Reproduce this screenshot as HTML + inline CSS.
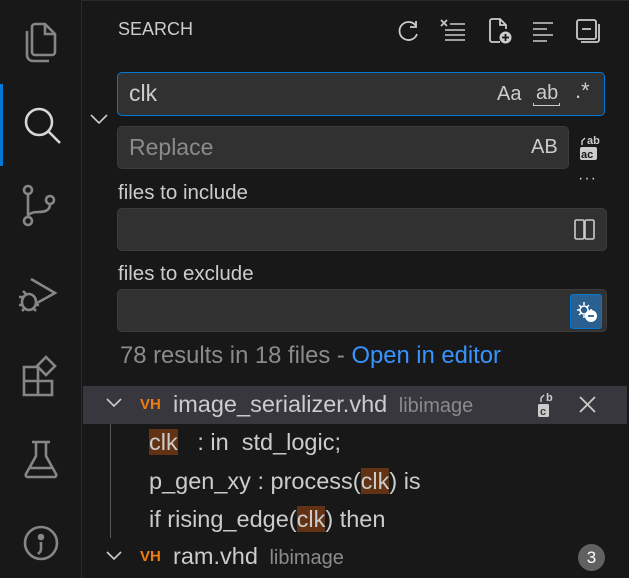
<!DOCTYPE html>
<html><head><meta charset="utf-8"><style>
*{margin:0;padding:0;box-sizing:border-box}
body{width:629px;height:578px;background:#181818;font-family:"Liberation Sans",sans-serif;color:#ccc;position:relative;overflow:hidden}
.ab{position:absolute;left:0;top:0;width:82px;height:578px;background:#181818;border-right:1px solid #2b2b2b}
.abar{position:absolute;left:0;top:84px;width:3px;height:82px;background:#0078d4}
.a{position:absolute}
.inp{position:absolute;background:#313131;border:1px solid #3c3c3c;border-radius:5px}
.t{position:absolute;white-space:nowrap}
.hl{background:#613214}
.lib{font-size:20px;color:#8b8b8b;margin-left:6px}
svg{position:absolute;overflow:visible}
</style></head><body>
<div style="position:absolute;left:0;top:0;width:629px;height:1px;background:#2b2b2b"></div>
<div class="ab"></div><div class="abar"></div>
<svg style="left:22px;top:22px" width="36" height="42" fill="none" stroke="#868686" stroke-width="2.6"><path d="M13 2h10l10 10v18a3 3 0 0 1-3 3H13a3 3 0 0 1-3-3V5a3 3 0 0 1 3-3z"/><path d="M23 2v10h10"/><path d="M5 9v24a6 6 0 0 0 6 6h16"/></svg>
<svg style="left:22px;top:105px" width="40" height="40" fill="none" stroke="#d7d7d7" stroke-width="2.6"><circle cx="17" cy="17" r="13"/><path d="M26 26l12 12"/></svg>
<svg style="left:22px;top:185px" width="40" height="45" fill="none" stroke="#868686" stroke-width="2.6"><circle cx="6" cy="5" r="4"/><circle cx="28" cy="15" r="4"/><circle cx="6" cy="36" r="4"/><path d="M6 9v23M28 19c0 6-4 8-12 8-6 0-10 2-10 5"/></svg>
<svg style="left:18px;top:275px" width="45" height="40" fill="none" stroke="#868686" stroke-width="2.6"><path d="M13 4l24 14-18 10"/><ellipse cx="11" cy="27" rx="7" ry="8"/><path d="M1 22h4M1 30h4M17 30h4M4 36l3-3M18 36l-3-3M5 16l3 3"/></svg>
<svg style="left:22px;top:355px" width="42" height="42" fill="none" stroke="#868686" stroke-width="2.6"><path d="M2 12h14v14H2zM2 26h14v14H2zM16 26h14v14H16zM2 12v28"/><path d="M24 2l9 9-9 9-9-9z"/></svg>
<svg style="left:24px;top:440px" width="36" height="40" fill="none" stroke="#868686" stroke-width="2.6"><path d="M8 2h18M12 2v14L2 34a2 2 0 0 0 2 3h26a2 2 0 0 0 2-3L22 16V2M6 28h22"/></svg>
<svg style="left:20px;top:522px" width="42" height="42" fill="none" stroke="#868686" stroke-width="2.6"><circle cx="21" cy="21" r="16"/><circle cx="21" cy="15" r="2" fill="#868686"/><path d="M21 20v7c0 3-2 4-3 5"/></svg>

<div class="t" style="left:118px;top:19px;font-size:18px;color:#ccc">SEARCH</div>
<svg style="left:398px;top:20px" width="22" height="22" fill="none" stroke="#ccc" stroke-width="1.8"><path d="M18 6A9 9 0 1 0 19 14"/><path d="M18 1v6h-6"/></svg>
<svg style="left:440px;top:19px" width="26" height="22" fill="none" stroke="#ccc" stroke-width="1.6"><path d="M1 1l6 6M7 1L1 7M10 5h15M5 11h20M5 16h20M5 21h20"/></svg>
<svg style="left:488px;top:18px" width="26" height="28" fill="none" stroke="#ccc" stroke-width="1.8"><path d="M12 24H4a2 2 0 0 1-2-2V3a2 2 0 0 1 2-2h8l6 6v4"/><path d="M12 1v6h6"/><circle cx="17.5" cy="19.5" r="6" fill="#ccc" stroke="none"/><path d="M17.5 16v7M14 19.5h7" stroke="#181818" stroke-width="1.8"/></svg>
<svg style="left:532px;top:22px" width="22" height="20" fill="none" stroke="#ccc" stroke-width="1.6"><path d="M1 1h20M1 7h14M1 13h20M1 19h14"/></svg>
<svg style="left:576px;top:19px" width="24" height="24" fill="none" stroke="#ccc" stroke-width="1.8"><rect x="1" y="1" width="19" height="19" rx="2"/><path d="M6 10h9M23 5v16a2 2 0 0 1-2 2H5"/></svg>

<svg style="left:90px;top:114px" width="18" height="12" fill="none" stroke="#ccc" stroke-width="1.6"><path d="M1 1l8 8 8-8"/></svg>

<div class="inp" style="left:117px;top:72px;width:488px;height:44px;border-color:#0078d4"></div>
<div class="t" style="left:129px;top:80px;font-size:23px;color:#ccc">clk</div>
<div class="t" style="left:497px;top:83px;font-size:20px;color:#ccc">Aa</div>
<div class="t" style="left:536px;top:82px;font-size:20px;color:#ccc">ab</div>
<div class="a" style="left:533px;top:103px;width:27px;height:3px;border:1.5px solid #ccc;border-top:none"></div>
<div class="t" style="left:575px;top:78px;font-size:22px;color:#ccc">.*</div>

<div class="inp" style="left:117px;top:126px;width:452px;height:43px"></div>
<div class="t" style="left:129px;top:134px;font-size:23px;color:#8b8b8b">Replace</div>
<div class="t" style="left:531px;top:136px;font-size:20px;color:#ccc">AB</div>
<svg style="left:578px;top:134px" width="26" height="28"><text x="9" y="10" font-size="11" fill="#ccc" font-family="Liberation Sans" font-weight="bold">ab</text><rect x="2" y="13" width="17" height="13" rx="2" fill="#ccc"/><text x="3" y="24" font-size="11" fill="#181818" font-family="Liberation Sans" font-weight="bold">ac</text><path d="M7 4l-3 3v4" stroke="#ccc" fill="none" stroke-width="1.4"/></svg>
<div class="t" style="left:578px;top:170px;font-size:16px;color:#ccc;letter-spacing:1px">···</div>

<div class="t" style="left:118px;top:181px;font-size:20.5px;color:#ccc">files to include</div>
<div class="inp" style="left:117px;top:208px;width:490px;height:43px"></div>
<svg style="left:574px;top:219px" width="22" height="22" fill="none" stroke="#ccc" stroke-width="1.6"><rect x="1" y="1" width="9" height="19" rx="1.5"/><rect x="11" y="1" width="9" height="19" rx="1.5"/></svg>

<div class="t" style="left:118px;top:262px;font-size:20.5px;color:#ccc">files to exclude</div>
<div class="inp" style="left:117px;top:289px;width:490px;height:43px"></div>
<div class="a" style="left:570px;top:294px;width:32px;height:35px;background:#2b5f8f;border:1px solid #0078d4;border-radius:3px"></div>
<svg style="left:575px;top:300px" width="24" height="24" fill="none" stroke="#fff" stroke-width="1.5"><circle cx="9" cy="10" r="4"/><path d="M9 2v3M9 15v3M2 10h3M15 10h2M4 5l2 2M14 5l-2 2M4 15l2-2"/><circle cx="16" cy="16" r="6" fill="#fff" stroke="none"/><path d="M13 16h6" stroke="#2b5f8f" stroke-width="1.8"/></svg>

<div class="t" style="left:120px;top:342px;font-size:23.8px;color:#8b8b8b">78 results in 18 files - <span style="color:#3794ff">Open in editor</span></div>

<div class="a" style="left:83px;top:386px;width:544px;height:38px;background:#37373d"></div>
<svg style="left:106px;top:398px" width="18" height="12" fill="none" stroke="#ccc" stroke-width="1.6"><path d="M1 1l7 7 7-7"/></svg>
<div class="t" style="left:140px;top:396px;font-size:15px;color:#f07c0e;font-weight:bold">VH</div>
<div class="t" style="left:173px;top:391px;font-size:23.5px;color:#ccc">image_serializer.vhd<span class="lib">&nbsp;libimage</span></div>
<svg style="left:536px;top:391px" width="24" height="28"><text x="10" y="10" font-size="11" fill="#ccc" font-family="Liberation Sans" font-weight="bold">b</text><rect x="2" y="13" width="11" height="13" rx="1.5" fill="#ccc"/><text x="4" y="24" font-size="11" fill="#37373d" font-family="Liberation Sans" font-weight="bold">c</text><path d="M8 4l-3 3v4" stroke="#ccc" fill="none" stroke-width="1.4"/></svg>
<svg style="left:579px;top:396px" width="18" height="18" fill="none" stroke="#ccc" stroke-width="1.8"><path d="M1 1l15 15M16 1L1 16"/></svg>

<div class="a" style="left:110px;top:424px;width:1px;height:114px;background:#585858"></div>
<div class="t" style="left:149px;top:429px;font-size:23.5px;color:#ccc"><span class="hl">clk</span>&nbsp;&nbsp; : in &nbsp;std_logic;</div>
<div class="t" style="left:149px;top:468px;font-size:23.5px;color:#ccc">p_gen_xy : process(<span class="hl">clk</span>) is</div>
<div class="t" style="left:149px;top:506px;font-size:23.5px;color:#ccc">if rising_edge(<span class="hl">clk</span>) then</div>

<svg style="left:106px;top:551px" width="18" height="12" fill="none" stroke="#ccc" stroke-width="1.6"><path d="M1 1l7 7 7-7"/></svg>
<div class="t" style="left:140px;top:548px;font-size:15px;color:#f07c0e;font-weight:bold">VH</div>
<div class="t" style="left:173px;top:543px;font-size:23.5px;color:#ccc">ram.vhd<span class="lib">&nbsp;libimage</span></div>
<div class="a" style="left:578px;top:544px;width:27px;height:27px;border-radius:50%;background:#616161;color:#fff;font-size:17px;text-align:center;line-height:27px">3</div>
</body></html>
